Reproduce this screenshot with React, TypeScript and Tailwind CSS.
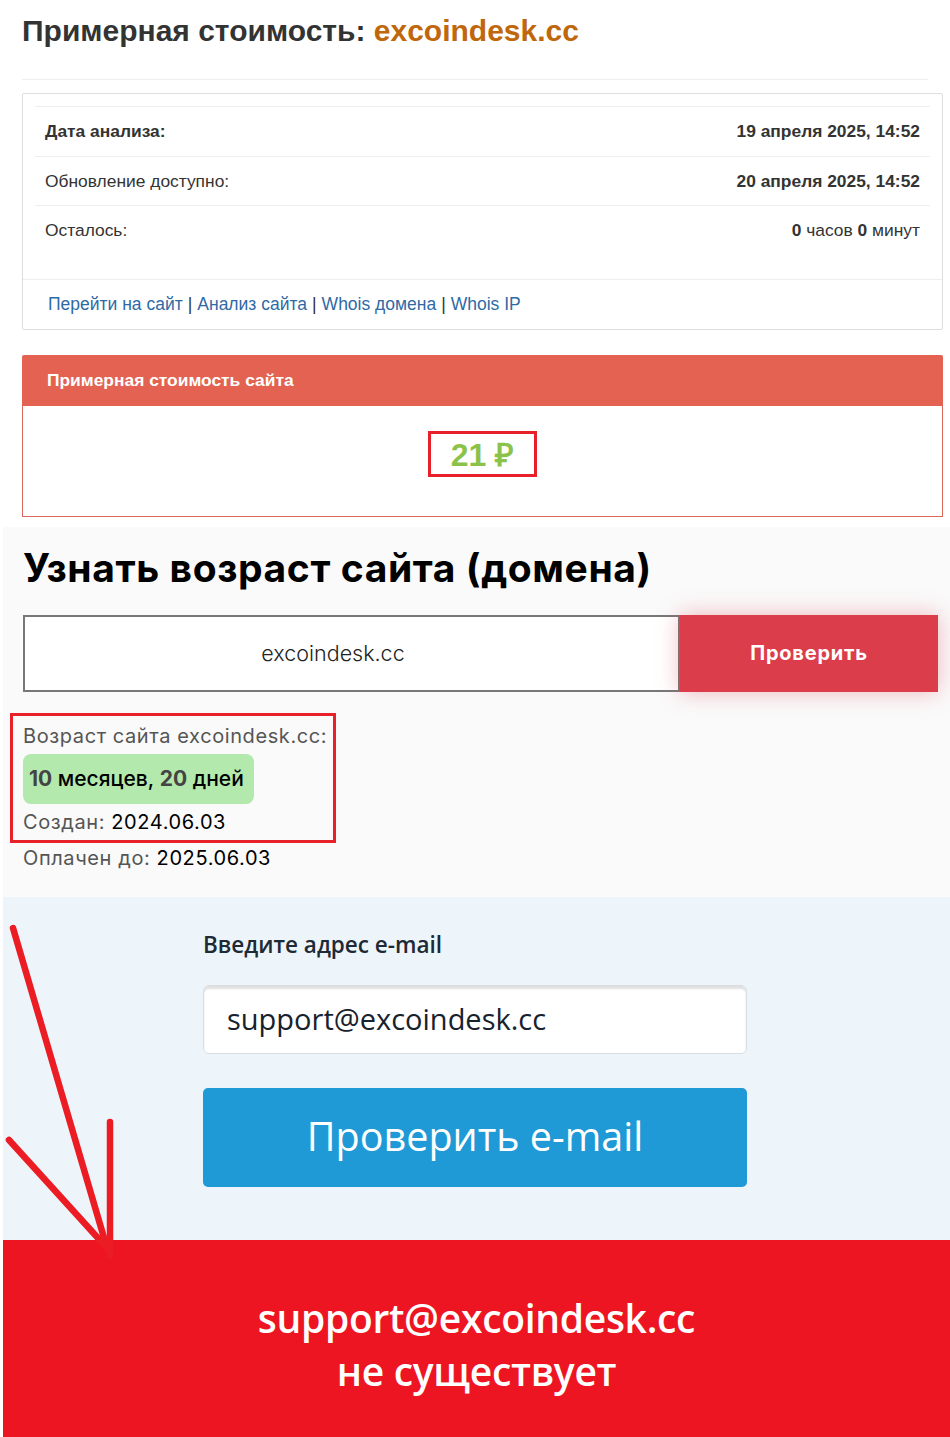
import React from 'react';

const rows = [
  { label: 'Дата анализа:', bold: true, value: <b>19 апреля 2025, 14:52</b> },
  { label: 'Обновление доступно:', bold: false, value: <b>20 апреля 2025, 14:52</b> },
  {
    label: 'Осталось:',
    bold: false,
    value: (
      <>
        <b>0</b> часов <b>0</b> минут
      </>
    ),
  },
];

const links = ['Перейти на сайт', 'Анализ сайта', 'Whois домена', 'Whois IP'];

function CostCard() {
  return (
    <div className="bg-white px-[22px] pb-[10px] font-['Liberation_Sans',Arial,sans-serif] text-[#333]">
      <h1 className="pt-[14px] text-[30px] font-bold leading-[34px] text-[#333]">
        Примерная стоимость: <span className="text-[#c0670c]">excoindesk.cc</span>
      </h1>
      <div className="mt-[31px] border-t border-[#eee]" />

      {/* Info card */}
      <div className="mt-[13px] w-[921px] rounded-[2px] border border-[#ddd] bg-white">
        <div className="px-[12px] pt-[12px] pb-[24px]">
          {rows.map((r) => (
            <div
              key={r.label}
              className="flex h-[49.5px] items-center justify-between border-t border-[#eee] px-[10px] text-[17.4px]"
            >
              <span className={r.bold ? 'font-bold' : ''}>{r.label}</span>
              <span>{r.value}</span>
            </div>
          ))}
        </div>
        <div className="flex h-[50px] items-center border-t border-[#eee] px-[25px] text-[17.5px]">
          {links.map((l, i) => (
            <React.Fragment key={l}>
              {i > 0 && <span className="px-[5px] text-[#333]">|</span>}
              <a className="text-[#2f6aa5]">{l}</a>
            </React.Fragment>
          ))}
        </div>
      </div>

      {/* Price panel */}
      <div className="mt-[25px] w-[921px] overflow-hidden rounded-t-[2px]">
        <div className="flex h-[51px] items-center bg-[#e36251] px-[25px] text-[17.4px] font-bold text-white">
          Примерная стоимость сайта
        </div>
        <div className="flex h-[111px] justify-center border-x border-b border-[#d9675a] bg-white pt-[25px]">
          <div className="flex h-[46px] w-[109px] items-center justify-center border-[3px] border-[#e8202a] pt-[2px] text-[32px] font-bold text-[#8bc34a]">
            21 ₽
          </div>
        </div>
      </div>
    </div>
  );
}

function AgeSection() {
  return (
    <div className="ml-[3px] bg-[#fafafa] pl-[20px] pb-[21px] font-['Inter',sans-serif]">
      <h2 className="pt-[20px] text-[39px] font-bold leading-[42px] tracking-[0.6px] text-black">
        Узнать возраст сайта (домена)
      </h2>
      <div className="mt-[26px] flex h-[77px]">
        <div className="flex w-[657px] items-center justify-center border-2 border-[#777] bg-white pr-[37px] text-[21.5px] font-light text-[#222]">
          excoindesk.cc
        </div>
        <button className="w-[258px] bg-[#dc3d4b] text-[20px] font-bold tracking-[0.8px] text-white shadow-[0_0_22px_rgba(220,61,75,0.35)]">
          Проверить
        </button>
      </div>

      <div className="relative mt-[26px] w-fit">
        <div className="text-[20px] leading-[36px] tracking-[0.6px] text-[#555]">
          Возраст сайта excoindesk.cc:
        </div>
        <div className="flex h-[50px] w-[231px] items-center rounded-[8px] bg-[#b4e9ad] pl-[6px] text-[21px] font-medium text-black">
          <b className="font-bold text-[#444]">10</b>&nbsp;месяцев,&nbsp;
          <b className="font-bold text-[#444]">20</b>&nbsp;дней
        </div>
        <div className="text-[20px] leading-[37px] tracking-[0.6px] text-[#555]">
          Создан: <span className="text-black">2024.06.03</span>
        </div>
        <div className="pointer-events-none absolute -left-[13px] -top-[5px] h-[130px] w-[326px] border-[3px] border-[#e8202a]" />
      </div>
      <div className="text-[20px] leading-[35px] tracking-[0.6px] text-[#555]">
        Оплачен до: <span className="text-black">2025.06.03</span>
      </div>
    </div>
  );
}

function EmailSection() {
  return (
    <div className="ml-[3px] bg-[#eef5fa] pl-[200px] pb-[53px] font-['Open_Sans',sans-serif]">
      <div className="pt-[34px] text-[22.5px] font-semibold leading-[28px] text-[#1e2a35]">
        Введите адрес e-mail
      </div>
      <div className="mt-[26px] flex h-[69px] w-[544px] items-center rounded-[6px] border border-[#d9dde0] bg-white pl-[23px] text-[29px] text-[#17222d] shadow-[inset_0_3px_2px_rgba(0,0,0,0.12)]">
        support@excoindesk.cc
      </div>
      <button className="mt-[34px] flex h-[99px] w-[544px] items-center justify-center rounded-[5px] bg-[#1f9ad6] text-[39.5px] text-white">
        Проверить e-mail
      </button>
    </div>
  );
}

function ResultBanner() {
  return (
    <div className="ml-[3px] bg-[#ed1522] pt-[51px] pb-[40px] text-center font-['Open_Sans',sans-serif] text-[39px] font-semibold leading-[53px] tracking-[-0.3px] text-white">
      <div>support@excoindesk.cc</div>
      <div>не существует</div>
    </div>
  );
}

export default function App() {
  return (
    <div className="relative w-[950px] bg-white">
      <CostCard />
      <AgeSection />
      <EmailSection />
      <ResultBanner />

      {/* Annotation arrows */}
      <svg
        className="pointer-events-none absolute left-0 top-0"
        width="950"
        height="1437"
        viewBox="0 0 950 1437"
      >
        <g stroke="#ec1c24" strokeWidth="6.5" strokeLinecap="round" fill="none">
          <line x1="13" y1="928" x2="107" y2="1248" />
          <line x1="9" y1="1140" x2="107" y2="1248" />
          <line x1="110" y1="1122" x2="110" y2="1256" />
        </g>
      </svg>
    </div>
  );
}
